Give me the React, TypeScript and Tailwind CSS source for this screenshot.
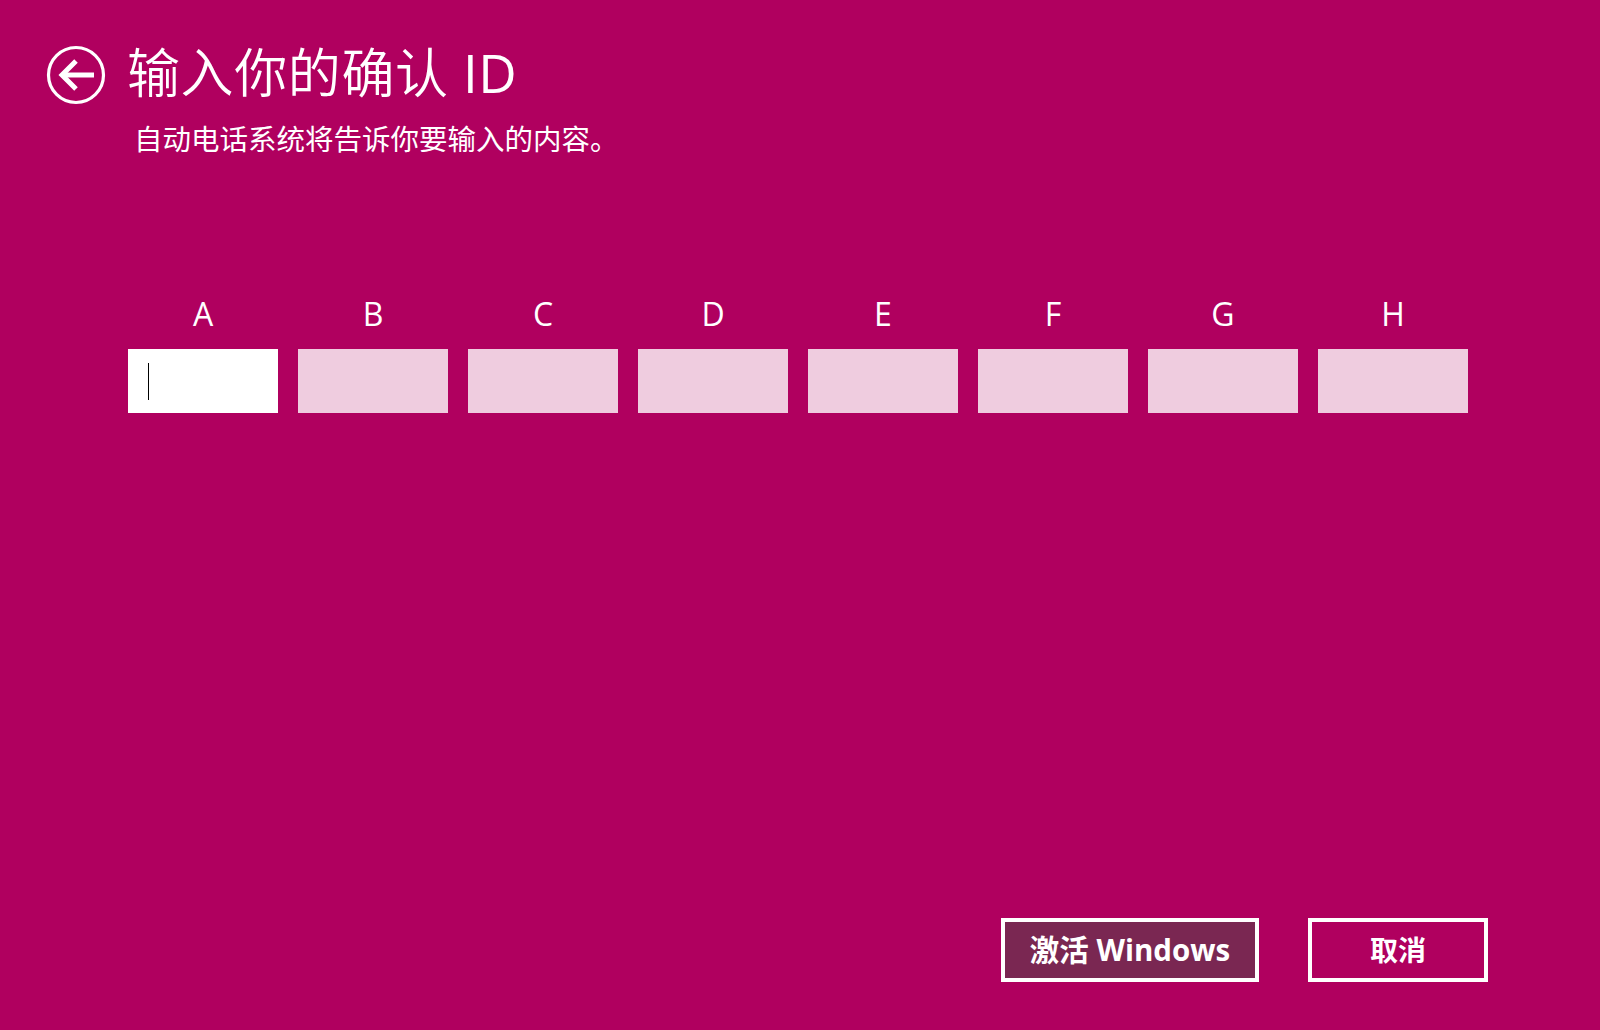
import React from 'react';

const slots = ['A', 'B', 'C', 'D', 'E', 'F', 'G', 'H'];

function BackIcon() {
    return (
        <svg width="60" height="60" viewBox="0 0 60 60" fill="none" className="shrink-0">
            <circle cx="30" cy="30" r="27.5" stroke="white" strokeWidth="3.2" />
            <path d="M16 30H48" stroke="white" strokeWidth="5" />
            <path d="M30 16L16 30L30 44" stroke="white" strokeWidth="5" strokeLinejoin="miter" />
        </svg>
    );
}

export default function App() {
    return (
        <div
            className="w-[1600px] h-[1030px] bg-[#b0005f] text-white flex flex-col overflow-hidden"
            style={{ fontFamily: '"Open Sans", "Noto Sans CJK SC", sans-serif' }}
        >
            <div className="flex items-start pl-[46px] pt-[45px]">
                <BackIcon />
                <h1 className="ml-[21px] mt-[1px] text-[53px] leading-[53px] font-[350] tracking-[0.6px]">
                    输入你的确认 <span className="font-normal">ID</span>
                </h1>
            </div>

            <p className="pl-[134px] mt-[20px] text-[28.5px] leading-[28px] font-normal">
                自动电话系统将告诉你要输入的内容。
            </p>

            <div className="pl-[128px] mt-[145px] flex gap-[20px]">
                {slots.map((s, i) => (
                    <div key={s} className="w-[150px] flex flex-col items-center">
                        <span className="text-[32px] leading-[32px]">{s}</span>
                        <div
                            className={
                                i === 0
                                    ? 'mt-[19px] w-[150px] h-[64px] bg-white flex items-center pl-[20px]'
                                    : 'mt-[19px] w-[150px] h-[64px] bg-[#efccdf]'
                            }
                        >
                            {i === 0 && <div className="w-px h-[37px] bg-black" />}
                        </div>
                    </div>
                ))}
            </div>

            <div className="flex-1" />

            <div className="flex justify-end gap-[49px] pr-[112px] pb-[48px]">
                <button className="w-[258px] h-[64px] border-4 border-white bg-[#7a2752] text-[29.5px] font-bold leading-none flex items-center justify-center">
                    激活 Windows
                </button>
                <button className="w-[180px] h-[64px] border-4 border-white text-[28px] font-bold leading-none flex items-center justify-center">
                    取消
                </button>
            </div>
        </div>
    );
}
